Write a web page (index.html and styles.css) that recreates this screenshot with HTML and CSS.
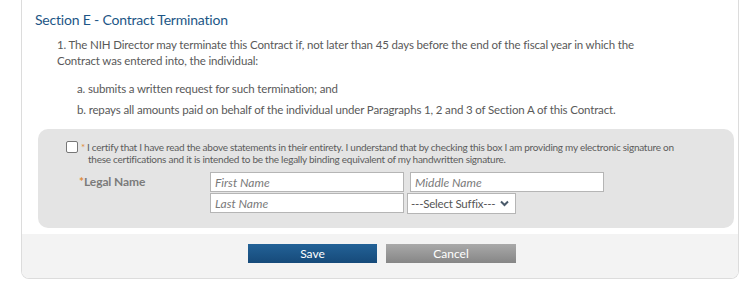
FILE: index.html
```html
<!DOCTYPE html>
<html>
<head>
<meta charset="utf-8">
<link rel="stylesheet" href="styles.css">
</head>
<body>
<div class="page">
  <div class="card">
    <div class="content">
      <h2 class="title">Section E - Contract Termination</h2>
      <p class="para">1. The NIH Director may terminate this Contract if, not later than 45 days before the end of the fiscal year in which the Contract was entered into, the individual:</p>
      <ul class="items">
        <li>a. submits a written request for such termination; and</li>
        <li>b. repays all amounts paid on behalf of the individual under Paragraphs 1, 2 and 3 of Section A of this Contract.</li>
      </ul>
      <div class="signbox">
        <div class="cert">
          <span class="check"></span>
          <p class="cert-text"><span class="star small">*</span>I certify that I have read the above statements in their entirety. I understand that by checking this box I am providing my electronic signature on these certifications and it is intended to be the legally binding equivalent of my handwritten signature.</p>
        </div>
        <div class="name-row">
          <div class="label"><span class="star">*</span>Legal Name</div>
          <div class="fields">
            <input class="field" type="text" placeholder="First Name">
            <input class="field" type="text" placeholder="Middle Name">
            <input class="field" type="text" placeholder="Last Name">
            <div class="select"><span>---Select Suffix---</span>
              <svg class="chev" width="9" height="7" viewBox="0 0 9 7"><path d="M1 1.5 L4.5 5 L8 1.5" fill="none" stroke="#4a5a6a" stroke-width="2"/></svg>
            </div>
          </div>
        </div>
      </div>
    </div>
    <div class="footer">
      <button class="btn save">Save</button>
      <button class="btn cancel">Cancel</button>
    </div>
  </div>
</div>
</body>
</html>
```
FILE: styles.css
```css
html, body {
  margin: 0;
  padding: 0;
  background: #fff;
}
body {
  font-family: "Lato", "DejaVu Sans", sans-serif;
  color: #555;
}
.page {
  padding: 0 13px 0 21px;
}
.card {
  width: 716px;
  border: 1px solid #dcdcdc;
  border-top: none;
  border-radius: 0 0 8px 8px;
  background: #fff;
}
.content {
  padding: 10px 0 6px 0;
}
.title {
  margin: 0 0 0 13px;
  font-size: 14px;
  letter-spacing: -0.2px;
  line-height: 20px;
  font-weight: normal;
  color: #1d5686;
}
.para {
  margin: 7px 80px 0 35px;
  font-size: 11.5px;
  letter-spacing: -0.15px;
  line-height: 16px;
  color: #595959;
}
.items {
  list-style: none;
  margin: 12px 0 0 55px;
  padding: 0;
  font-size: 11.5px;
  letter-spacing: -0.15px;
  line-height: 16px;
  color: #595959;
}
.items li + li {
  margin-top: 5px;
}
.signbox {
  margin: 11px 4px 0 16px;
  background: #e4e4e4;
  border-radius: 10px;
  padding: 12px 0 14px 28px;
}
.cert {
  display: flex;
  align-items: flex-start;
}
.check {
  flex: none;
  width: 10px;
  height: 10px;
  border: 1px solid #777;
  border-radius: 2px;
  background: #fff;
}
.cert-text {
  margin: 0 0 0 10px;
  font-size: 10px;
  letter-spacing: -0.26px;
  line-height: 12px;
  color: #5c5c5c;
  width: 600px;
}
.star {
  color: #e08a3a;
}
.star.small {
  display: inline-block;
  width: 6px;
  margin-left: -7px;
  font-size: 10px;
}
.name-row {
  display: flex;
  margin-top: 7px;
}
.label {
  width: 131px;
  padding-left: 13px;
  padding-top: 2px;
  font-size: 12px;
  letter-spacing: -0.1px;
  font-weight: bold;
  color: #7b7b7b;
  line-height: 16px;
}
.fields {
  display: grid;
  grid-template-columns: 194px 194px;
  column-gap: 6px;
  row-gap: 1px;
}
.field {
  box-sizing: border-box;
  width: 194px;
  height: 20px;
  margin: 0;
  border: 1px solid #b5b5b5;
  background: #fff;
  padding: 0 4px;
  font-family: "Lato", "DejaVu Sans", sans-serif;
  font-size: 12px;
  color: #555;
  outline: none;
}
.field::placeholder {
  font-style: italic;
  color: #7a7a7a;
}
.select {
  box-sizing: border-box;
  width: 109px;
  height: 21px;
  margin-left: -3px;
  border: 1px solid #b5b5b5;
  background: #fff;
  display: flex;
  align-items: center;
  padding: 0 4px 0 3px;
  gap: 5px;
  font-size: 11.5px;
  letter-spacing: -0.2px;
  white-space: nowrap;
  color: #555;
}
.footer {
  background: #f3f3f3;
  height: 44px;
  border-radius: 0 0 7px 7px;
  display: flex;
  align-items: flex-start;
  padding: 10px 0 0 226px;
  box-sizing: border-box;
  gap: 9px;
}
.btn {
  margin: 0;
  height: 19px;
  border: none;
  padding: 0;
  font-family: "Lato", "DejaVu Sans", sans-serif;
  font-size: 12px;
  color: #fff;
}
.save {
  width: 129px;
  background: linear-gradient(#236297, #164a7a);
}
.cancel {
  width: 130px;
  background: linear-gradient(#a9a9a9, #868686);
}
```
